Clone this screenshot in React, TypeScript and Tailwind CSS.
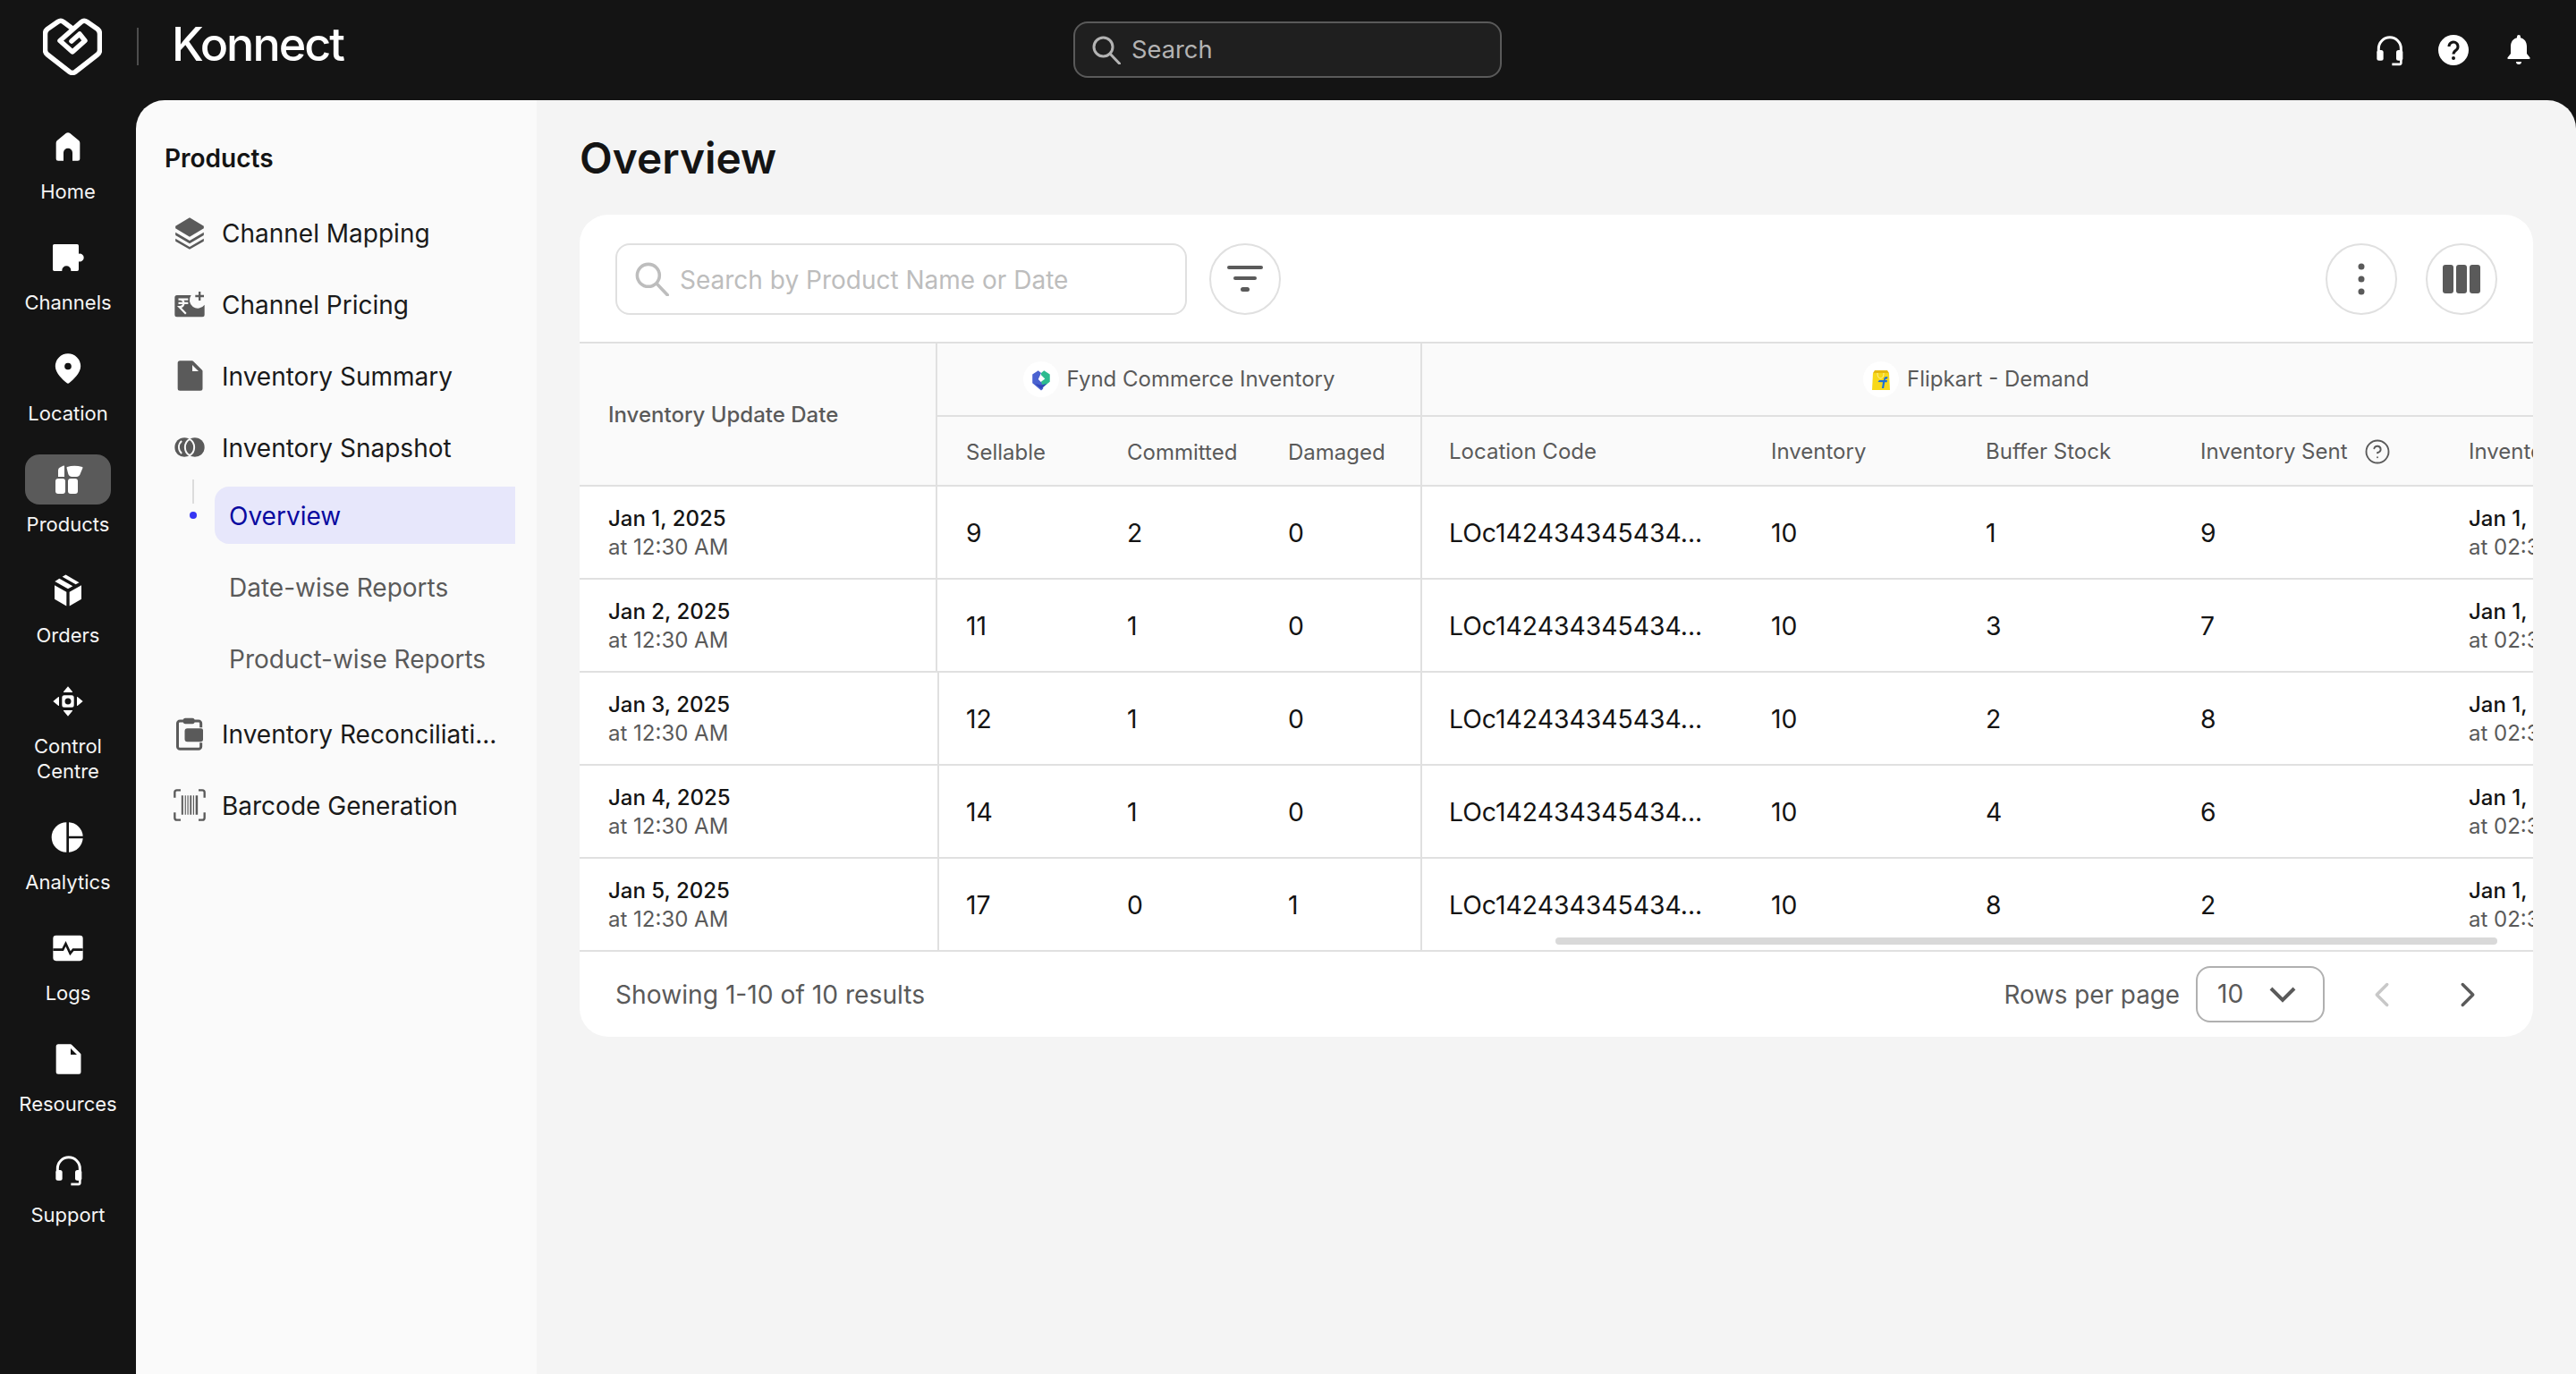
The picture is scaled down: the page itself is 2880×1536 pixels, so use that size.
import React from "react";
import { ChevronLeft, ChevronRight, CircleHelp } from "lucide-react";

const G = ({ children, className }: { children: React.ReactNode; className?: string }) => (
  <svg viewBox="0 0 24 24" fill="currentColor" className={`w-[40px] h-[40px] shrink-0 ${className ?? ""}`}>
    {children}
  </svg>
);

const HomeIcon = () => (
  <G>
    <path d="M12 2.500c.5 0 1 .2 1.400.5l6 5c.4.4.6.9.6 1.500V20a1.500 1.500 0 0 1-1.500 1.500H15v-5.500a3 3 0 0 0-6 0v5.500H5.500A1.500 1.500 0 0 1 4 20V9.500c0-.6.2-1.100.6-1.500l6-5c.4-.3.9-.5 1.400-.5z" />
  </G>
);
const ChannelsIcon = () => (
  <G>
    <path d="M2.800 3h15.400a1 1 0 0 1 1 1v5.400a2.700 2.700 0 1 1 0 5.200V20a1 1 0 0 1-1 1H14v-.5a3 3 0 0 0-6 0v.5H2.800a1 1 0 0 1-1-1V4a1 1 0 0 1 1-1z" />
  </G>
);
const PinIcon = () => (
  <G>
    <path
      fillRule="evenodd"
      d="M12 2a8.500 8.500 0 0 0-8.500 8.500c0 4.500 5 9 7.600 11.100a1.300 1.300 0 0 0 1.800 0c2.600-2.100 7.600-6.600 7.600-11.100A8.500 8.500 0 0 0 12 2zm0 10.800a2.300 2.300 0 1 1 0-4.600 2.300 2.300 0 0 1 0 4.600z"
    />
  </G>
);
const ProductsIcon = () => (
  <svg viewBox="0 0 40 40" fill="currentColor" className="w-[40px] h-[40px] shrink-0">
    <rect x="6" y="19" width="11" height="17" rx="3" />
    <path d="M9 17v-7q0-3 3-4l3-1.500q1-.4 1 .7V17z" />
    <rect x="20" y="19" width="11" height="17" rx="3" />
    <path d="M19 6q8-2.500 17 0 .8.300.4 1.200l-2.500 6q-1.100 3.800-4.400 3.800h-5q-3.300 0-4.400-3.800l-1.500-6q-.2-.9.400-1.200z" />
  </svg>
);
const OrdersIcon = () => (
  <G>
    <path d="M3 8.500l8 4.600V22.500l-8-4.600z" />
    <path d="M21 8.500l-8 4.600V22.500l8-4.600z" />
    <path d="M10.500 1.500l9 5.200-2.300 1.300-9-5.200z" />
    <path d="M6.200 4l9 5.200L12 11 3.200 6z" />
  </G>
);
const ControlIcon = () => (
  <G>
    <path
      fillRule="evenodd"
      d="M9.500 8h5A1.500 1.500 0 0 1 16 9.500v5a1.500 1.500 0 0 1-1.500 1.500h-5A1.500 1.500 0 0 1 8 14.500v-5A1.500 1.500 0 0 1 9.500 8zM12 9.900a2.100 2.100 0 1 0 0 4.200 2.100 2.100 0 0 0 0-4.200z"
    />
    <path d="M12 2l3 3.600a.3.300 0 0 1-.2.400H9.200a.3.300 0 0 1-.2-.4zM12 22l3-3.600a.3.300 0 0 0-.2-.4H9.200a.3.300 0 0 0-.2.4zM2 12l3.600-3a.3.300 0 0 1 .4.200v5.600a.3.300 0 0 1-.4.200zM22 12l-3.600-3a.3.300 0 0 0-.4.200v5.600a.3.300 0 0 0 .4.200z" />
  </G>
);
const AnalyticsIcon = () => (
  <G>
    <path d="M11 2a10 10 0 0 0 0 20z" />
    <path d="M12.600 2a10 10 0 0 1 9.400 9.200h-9.400z" />
    <path d="M12.600 12.800H22a10 10 0 0 1-9.400 9.200z" />
  </G>
);
const LogsIcon = () => (
  <G>
    <rect x="2" y="3.500" width="20" height="17" rx="2" />
    <path d="M2 13h6.500l2-4 3 6.500 2-2.500H22" fill="none" stroke="#141414" strokeWidth="1.600" />
  </G>
);
const FileIcon = () => (
  <G>
    <path
      fillRule="evenodd"
      d="M5.500 2h8.200c.3 0 .5.100.7.300l6 6c.2.200.3.400.3.700V20.500a1.500 1.500 0 0 1-1.500 1.500H5.500A1.500 1.500 0 0 1 4 20.500v-17A1.500 1.500 0 0 1 5.500 2zm8.300 2.800V9h4.200z"
    />
  </G>
);
const HeadsetIcon = () => (
  <G>
    <path d="M5 14v-3a7.500 7.500 0 0 1 15 0v3" fill="none" stroke="currentColor" strokeWidth="1.800" />
    <rect x="3.800" y="12" width="4.400" height="7" rx="1.500" />
    <rect x="16.800" y="12" width="4.400" height="7" rx="1.500" />
    <path d="M20 18v2.600a.9.900 0 0 1-.9.900H14" fill="none" stroke="currentColor" strokeWidth="1.600" />
  </G>
);
const HelpFilled = () => (
  <svg viewBox="0 0 34 34" className="w-[34px] h-[34px]">
    <circle cx="17" cy="17" r="17" fill="#fff" />
    <path d="M12 13a5 5 0 1 1 8 4c-2 1.400-3 2.300-3 4.500" fill="none" stroke="#141414" strokeWidth="3" />
    <circle cx="17" cy="26" r="2" fill="#141414" />
  </svg>
);
const BellIcon = () => (
  <svg viewBox="0 0 26 34" fill="#fff" className="w-[26px] h-[34px]">
    <path d="M13 0a2 2 0 0 1 2 2v1.300c4.400 1 7 4.700 7 9.700v8l3.400 4.300c.6.900.2 1.700-.9 1.700H1.500c-1.100 0-1.500-.8-.9-1.700L4 21v-8c0-5 2.600-8.700 7-9.700V2a2 2 0 0 1 2-2z" />
    <path d="M10 30h6a3 3 0 0 1-6 0z" />
  </svg>
);

const LayersIcon = () => (
  <G>
    <path d="M12 2l9.500 5.600v1.600L12 14.800 2.500 9.200V7.600z" />
    <path d="M2.500 11.800L12 17.400l9.500-5.600v2L12 19.400 2.500 13.800z" />
    <path d="M2.500 16L12 21.600l9.500-5.600v1.800L12 23.200 2.500 17.800z" />
  </G>
);
const PricingIcon = () => (
  <G>
    <path d="M3.500 6H13a5.500 5.500 0 0 0 9 6.500V19a1.500 1.500 0 0 1-1.500 1.500h-17A1.500 1.500 0 0 1 2 19V7.500A1.500 1.500 0 0 1 3.500 6z" />
    <path d="M18 3.600h1.400v2.300h2.200v1.400h-2.200v2.300H18V7.300h-2.200V5.900H18z" />
    <path d="M4.500 8.800h6.500M4.500 11.300h6.500M5.500 8.800c3.500 0 3.500 5-.4 5l4.400 4.600" fill="none" stroke="#fafafa" strokeWidth="1.300" />
  </G>
);
const SnapshotIcon = () => (
  <G>
    <circle cx="8.500" cy="12" r="6.500" />
    <circle cx="15.500" cy="12" r="6.500" />
    <path d="M12 6.470A6.500 6.500 0 0 1 12 17.530M12 6.470A6.500 6.500 0 0 0 12 17.530" fill="none" stroke="#fafafa" strokeWidth="1.200" />
    <path d="M6.700 7.800a5.500 5.500 0 0 0 0 8.400" fill="none" stroke="#fafafa" strokeWidth="1.100" />
  </G>
);
const ClipboardIcon = () => (
  <G>
    <path d="M9 1.700h5a1.500 1.500 0 0 1 1.400 1h2.600A2.500 2.500 0 0 1 20.500 5.200v2.800h-1.800V5.200c0-.4-.3-.7-.7-.7h-2.600A1.500 1.500 0 0 1 14 5.500H9a1.500 1.500 0 0 1-1.400-1H5.500c-.4 0-.7.300-.7.700v15.600c0 .4.300.7.700.7h12.500c.4 0 .7-.3.700-.7v-2.600h1.800v2.600a2.500 2.500 0 0 1-2.500 2.500H5.500A2.500 2.500 0 0 1 3 20.800V5.200a2.500 2.500 0 0 1 2.500-2.500h2.100A1.500 1.500 0 0 1 9 1.700z" />
    <path d="M10.500 8.500h9.200a1.300 1.300 0 0 1 1.300 1.300v6.400a1.300 1.300 0 0 1-1.300 1.300h-9.200A1.800 1.800 0 0 1 8.700 15.700v-5.400a1.800 1.800 0 0 1 1.800-1.800z" />
  </G>
);
const BarcodeIcon = () => (
  <G>
    <path d="M2 7V3.500A1.500 1.500 0 0 1 3.500 2H6M22 7V3.500A1.500 1.500 0 0 0 20.500 2H18M2 17v3.500A1.500 1.500 0 0 0 3.500 22H6M22 17v3.500a1.500 1.500 0 0 1-1.500 1.500H18" fill="none" stroke="currentColor" strokeWidth="1.400" />
    <path d="M6.500 5.500h1.200v13H6.500zM8.800 5.500h.7v13h-.7zM10.500 5.500h.7v13h-.7zM12.200 5.500h1.100v13h-1.100zM14.300 5.500h.7v13h-.7zM16 5.500h1.500v13H16z" />
  </G>
);

const Logo = () => (
  <svg viewBox="48 24 66 64" className="w-[66px] h-[64px] shrink-0" fill="none" stroke="#fff" strokeWidth="5.500" strokeLinejoin="round" strokeLinecap="round">
    <path d="M81 36L71 28.500Q68 26 64.500 28.500L53 36.500Q50.500 38.500 50.500 42V60Q50.500 63 53 65L78 84.500Q81 86.500 84 84.500L109 65Q111.500 63 111.500 60V42Q111.500 38.500 109 36.500L97.500 28.500Q94 26 91 28.500L67 49.500L81 62L95 49.500L89 42L80 50" />
  </svg>
);

// magnifier with the small head and long handle used in both search fields
const SearchGlyph = ({ className }: { className: string }) => (
  <svg viewBox="0 0 32 32" fill="none" stroke="currentColor" strokeWidth="3" strokeLinecap="round" className={className}>
    <circle cx="12.500" cy="12.500" r="10.500" />
    <path d="M20.500 20.500L30.500 31" />
  </svg>
);

const FyndMark = () => (
  <span className="w-[40px] h-[40px] rounded-full bg-white flex items-center justify-center shrink-0">
    <svg viewBox="0 0 24 24" className="w-[26px] h-[26px]">
      <path d="M3 7l6-4 3 2.500-3 6.500 3 3 2 0 0 7-2 1.500-9-7.500z" fill="#4a62d0" />
      <path d="M12 5.500L15 3l6 4v7.500L14 20l-2-5.500 4-3-4-4z" fill="#2dbb8f" />
      <path d="M12 22l-6-5.500 6 1.500 6-1.500z" fill="#3346b8" />
    </svg>
  </span>
);
const FlipkartMark = () => (
  <span className="w-[40px] h-[40px] rounded-full bg-white flex items-center justify-center shrink-0">
    <svg viewBox="0 0 24 24" className="w-[24px] h-[24px]">
      <path d="M3 5h18l1 19H2z" fill="#f7d81a" />
      <path d="M5 2h14l2 3H3z" fill="#e5b90f" />
      <path d="M8 5c0 4 1.500 6 3.500 6S15 9 15 5" fill="none" stroke="#fff4a8" strokeWidth="1" />
      <path d="M10 13h5l.5-2.500c.4-1.200 1.500-1.500 4-1.300l-.5 2.300-2 .2-.3 1.300h2.300l-.4 2.200h-2.400l-1.100 6.800H13l1-6.800-5.500-.2z" fill="#1c6fd8" />
    </svg>
  </span>
);

type RailItem = { label: React.ReactNode; icon: React.ReactNode; active?: boolean };
const rail: RailItem[] = [
  { label: "Home", icon: <HomeIcon /> },
  { label: "Channels", icon: <ChannelsIcon /> },
  { label: "Location", icon: <PinIcon /> },
  { label: "Products", icon: <ProductsIcon />, active: true },
  { label: "Orders", icon: <OrdersIcon /> },
  { label: <>Control<br />Centre</>, icon: <ControlIcon /> },
  { label: "Analytics", icon: <AnalyticsIcon /> },
  { label: "Logs", icon: <LogsIcon /> },
  { label: "Resources", icon: <FileIcon /> },
  { label: "Support", icon: <HeadsetIcon /> },
];

const NavRow = ({ icon, label, className }: { icon: React.ReactNode; label: string; className?: string }) => (
  <div className={`h-[80px] flex items-center gap-[16px] pl-[8px] text-[#1a1a1a] ${className ?? ""}`}>
    <span className="text-[#5a5a5a] flex">{icon}</span>
    <span className="text-[28px] pt-[1px] whitespace-nowrap">{label}</span>
  </div>
);

const rows = [
  { d: "Jan 1, 2025", s: "9", c: "2", dm: "0", b: "1", sent: "9" },
  { d: "Jan 2, 2025", s: "11", c: "1", dm: "0", b: "3", sent: "7" },
  { d: "Jan 3, 2025", s: "12", c: "1", dm: "0", b: "2", sent: "8", shift: true },
  { d: "Jan 4, 2025", s: "14", c: "1", dm: "0", b: "4", sent: "6", shift: true },
  { d: "Jan 5, 2025", s: "17", c: "0", dm: "1", b: "8", sent: "2", shift: true },
];

const CircleBtn = ({ children }: { children: React.ReactNode }) => (
  <button className="w-[80px] h-[80px] rounded-full border-2 border-[#e0e0e0] bg-white flex items-center justify-center shrink-0 text-[#5a5a5a]">
    {children}
  </button>
);

export default function App() {
  return (
    <div className="w-[2880px] h-[1536px] overflow-hidden bg-[#141414] flex flex-col font-['Inter',sans-serif]">
      <header className="h-[112px] shrink-0 flex items-center relative">
        <div className="flex items-center pl-[48px] w-[1200px] -mt-[8px]">
          <Logo />
          <div className="w-[2px] h-[42px] bg-[#4d4d4d] ml-[39px] mr-[37px]" />
          <span className="text-white text-[52px] font-medium leading-none tracking-[-2px] -mt-[5px]">Konnect</span>
        </div>
        <div className="w-[479px] h-[63px] -mt-[1px] rounded-[16px] border-2 border-[#5a5a5a] bg-[#1f1f1f] flex items-center pl-[19px] gap-[12px] text-[#b3b3b3]">
          <SearchGlyph className="w-[32px] h-[32px]" />
          <span className="text-[27.3px] pt-[1px]">Search</span>
        </div>
        <div className="ml-auto pr-[51px] flex items-center text-white -mt-[1px]">
          <HeadsetIcon />
          <span className="ml-[35px] flex"><HelpFilled /></span>
          <span className="ml-[43px] flex"><BellIcon /></span>
        </div>
      </header>

      <div className="flex-1 flex min-h-0">
        <nav className="w-[152px] shrink-0 flex flex-col items-center pt-[24px] gap-[32px] text-[#f5f5f5]">
          {rail.map((item, i) => (
            <div key={i} className="flex flex-col items-center gap-[8px] w-full">
              <div className={`w-[96px] h-[56px] rounded-[16px] flex items-center justify-center text-white ${item.active ? "bg-[#5a5a5a]" : ""}`}>
                {item.icon}
              </div>
              <span className="text-[22px] leading-[28px] text-center">{item.label}</span>
            </div>
          ))}
        </nav>

        <aside className="w-[448px] shrink-0 bg-[#fafafa] rounded-tl-[32px] pl-[32px] pr-[24px] pt-[45px] flex flex-col">
          <div className="h-[40px] flex items-center text-[28px] font-semibold text-[#141414] mb-[23px]">Products</div>
          <NavRow icon={<LayersIcon />} label="Channel Mapping" />
          <NavRow icon={<PricingIcon />} label="Channel Pricing" />
          <NavRow icon={<FileIcon />} label="Inventory Summary" />
          <NavRow icon={<SnapshotIcon />} label="Inventory Snapshot" />
          <div className="relative h-[80px] -mt-[4px] flex items-center pl-[56px]">
            <span className="absolute left-[31px] top-0 w-[2px] h-[27px] bg-[#dcdcdc]" />
            <span className="absolute left-[28px] top-[36px] w-[8px] h-[8px] rounded-full bg-[#3535f3]" />
            <div className="flex-1 h-[64px] rounded-l-[16px] bg-[#e7e7fb] flex items-center pl-[16px] pt-[1px] text-[28px] text-[#0a0aa0]">Overview</div>
          </div>
          <div className="h-[80px] flex items-center pl-[72px] pt-[1px] text-[28px] text-[#5a5a5a]">Date-wise Reports</div>
          <div className="h-[80px] flex items-center pl-[72px] pt-[1px] text-[28px] text-[#5a5a5a]">Product-wise Reports</div>
          <NavRow icon={<ClipboardIcon />} label="Inventory Reconciliati..." className="mt-[4px]" />
          <NavRow icon={<BarcodeIcon />} label="Barcode Generation" />
        </aside>

        <main className="flex-1 min-w-0 bg-[#f4f4f4] rounded-tr-[32px] px-[48px]">
          <h1 className="h-[64px] mt-[34px] mb-[30px] flex items-center text-[47.8px] font-semibold text-[#141414]">Overview</h1>

          <section className="h-[919px] bg-white rounded-[32px] overflow-hidden flex flex-col">
            <div className="h-[142px] shrink-0 flex items-start pt-[32px] px-[40px]">
              <div className="w-[639px] h-[80px] rounded-[16px] border-2 border-[#e0e0e0] flex items-center pl-[20px] gap-[12px] text-[#bdbdbd]">
                <SearchGlyph className="w-[38px] h-[38px]" />
                <span className="text-[28px] pt-[1px]">Search by Product Name or Date</span>
              </div>
              <div className="ml-[25px]">
                <CircleBtn>
                  <svg viewBox="0 0 40 30" className="w-[40px] h-[30px]" fill="currentColor">
                    <rect x="0" y="0" width="40" height="4" rx="2" />
                    <rect x="7" y="12" width="26" height="4" rx="2" />
                    <rect x="15" y="24" width="10" height="5" rx="2.500" />
                  </svg>
                </CircleBtn>
              </div>
              <div className="ml-auto flex gap-[32px]">
                <CircleBtn>
                  <svg viewBox="0 0 8 36" className="w-[8px] h-[36px]" fill="currentColor">
                    <circle cx="4" cy="4" r="3.500" />
                    <circle cx="4" cy="18" r="3.500" />
                    <circle cx="4" cy="32" r="3.500" />
                  </svg>
                </CircleBtn>
                <CircleBtn>
                  <svg viewBox="0 0 42 32" className="w-[42px] h-[32px]" fill="currentColor">
                    <rect x="0" y="0" width="12" height="32" rx="3" />
                    <rect x="15" y="0" width="12" height="32" rx="3" />
                    <rect x="30" y="0" width="12" height="32" rx="3" />
                  </svg>
                </CircleBtn>
              </div>
            </div>

            <div className="relative flex-1 min-h-0 overflow-hidden border-t-2 border-[#e0e0e0]">
              <div className="flex h-[160px] bg-[#fafafa] border-b-2 border-[#e0e0e0] w-[2700px] text-[24px] text-[#5a5a5a] whitespace-nowrap">
                <div className="w-[400px] shrink-0 border-r-2 border-[#e0e0e0] flex items-center pl-[32px] pt-[2px] font-medium">Inventory Update Date</div>
                <div className="w-[542px] shrink-0 border-r-2 border-[#e0e0e0] flex flex-col">
                  <div className="h-[82px] border-b-2 border-[#e0e0e0] flex items-center justify-center gap-[9px]">
                    <FyndMark />
                    <span>Fynd Commerce Inventory</span>
                  </div>
                  <div className="flex-1 flex items-center pt-[3px]">
                    <div className="w-[180px] pl-[32px]">Sellable</div>
                    <div className="w-[180px] pl-[32px]">Committed</div>
                    <div className="pl-[32px]">Damaged</div>
                  </div>
                </div>
                <div className="flex-1 flex flex-col">
                  <div className="h-[82px] border-b-2 border-[#e0e0e0] flex items-center pl-[493px] gap-[9px]">
                    <FlipkartMark />
                    <span>Flipkart - Demand</span>
                  </div>
                  <div className="flex-1 flex items-center pt-[1px]">
                    <div className="w-[358px] pl-[30px]">Location Code</div>
                    <div className="w-[240px] pl-[32px]">Inventory</div>
                    <div className="w-[240px] pl-[32px]">Buffer Stock</div>
                    <div className="w-[300px] pl-[32px] flex items-center gap-[18px]">
                      Inventory Sent
                      <CircleHelp className="w-[30px] h-[30px]" strokeWidth={1.500} />
                    </div>
                    <div className="pl-[32px]">Inventory Received</div>
                  </div>
                </div>
              </div>

              {rows.map((r) => (
                <div key={r.d} className="flex h-[104px] border-b-2 border-[#e0e0e0] w-[2700px] text-[28.3px] text-[#141414] whitespace-nowrap">
                  <div className={`${r.shift ? "w-[402px]" : "w-[400px]"} shrink-0 border-r-2 border-[#e0e0e0] flex flex-col justify-center pl-[32px] pt-[1px]`}>
                    <span className="text-[24px] leading-[32px] font-medium">{r.d}</span>
                    <span className="text-[24px] leading-[32px] text-[#5a5a5a]">at 12:30 AM</span>
                  </div>
                  <div className={`${r.shift ? "w-[178px] pl-[30px]" : "w-[180px] pl-[32px]"} flex items-center pt-[2px]`}>{r.s}</div>
                  <div className="w-[180px] pl-[32px] flex items-center pt-[2px]">{r.c}</div>
                  <div className="w-[182px] pl-[32px] border-r-2 border-[#e0e0e0] flex items-center pt-[2px]">{r.dm}</div>
                  <div className="w-[358px] pl-[30px] flex items-center pt-[2px]">LOc142434345434...</div>
                  <div className="w-[240px] pl-[32px] flex items-center pt-[2px]">10</div>
                  <div className="w-[240px] pl-[32px] flex items-center pt-[2px]">{r.b}</div>
                  <div className="w-[300px] pl-[32px] flex items-center pt-[2px]">{r.sent}</div>
                  <div className="pl-[32px] flex flex-col justify-center pt-[1px]">
                    <span className="text-[24px] leading-[32px] font-medium">Jan 1, 2025</span>
                    <span className="text-[24px] leading-[32px] text-[#5a5a5a]">at 02:30 PM</span>
                  </div>
                </div>
              ))}

              <div className="absolute left-[1091px] top-[664px] w-[1053px] h-[8px] rounded-full bg-[#d9d9d9]" />
            </div>

            <div className="h-[95px] shrink-0 flex items-center pl-[40px] pr-[50px] text-[28.2px] text-[#5a5a5a]">
              <span className="pt-[2px]">Showing 1-10 of 10 results</span>
              <span className="ml-auto pt-[2px] text-[27.8px]">Rows per page</span>
              <div className="ml-[18px] w-[144px] h-[63px] rounded-[16px] border-2 border-[#b0b0b0] flex items-center pl-[22px] gap-[29px]">
                <span>10</span>
                <svg viewBox="0 0 30 18" fill="none" stroke="currentColor" strokeWidth="4" className="w-[30px] h-[18px]">
                  <path d="M2 2l13 13L28 2" />
                </svg>
              </div>
              <ChevronLeft className="ml-[41px] w-[46px] h-[46px] text-[#c8c8c8]" strokeWidth={1.800} />
              <ChevronRight className="ml-[50px] w-[46px] h-[46px]" strokeWidth={1.800} />
            </div>
          </section>
        </main>
      </div>
    </div>
  );
}
